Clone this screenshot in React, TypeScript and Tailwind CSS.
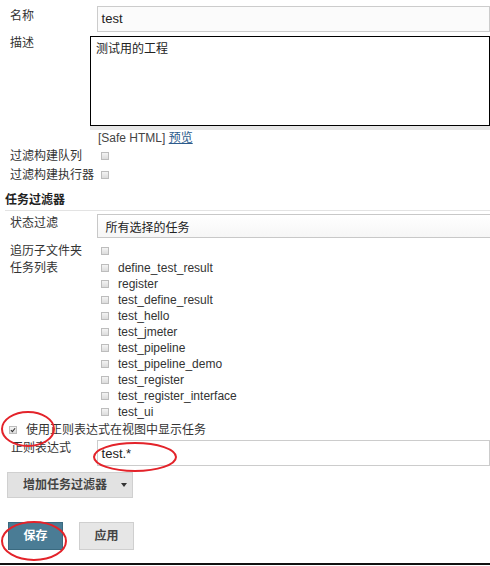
import React from "react";

const font = { fontFamily: '"Liberation Sans", "Noto Sans CJK SC", sans-serif' };

function Box({ checked = false }: { checked?: boolean }) {
  return (
    <span className="inline-flex h-[8px] w-[8px] shrink-0 items-center justify-center border border-[#bdbdbd] bg-gradient-to-b from-[#f4f4f4] to-[#dcdcdc]">
      {checked && (
        <svg width="8" height="8" viewBox="0 0 8 8">
          <path d="M1.2 4.2 L3.2 6.2 L6.8 1.6" stroke="#333" strokeWidth="1.4" fill="none" />
        </svg>
      )}
    </span>
  );
}

const jobs = [
  "define_test_result",
  "register",
  "test_define_result",
  "test_hello",
  "test_jmeter",
  "test_pipeline",
  "test_pipeline_demo",
  "test_register",
  "test_register_interface",
  "test_ui",
];

export default function App() {
  return (
    <div className="relative w-[490px] h-[566px] overflow-hidden bg-white text-[12px] text-[#333]" style={font}>
      <div className="flex flex-col pt-[6px]">
        {/* 名称 */}
        <div className="flex h-[26px]">
          <div className="w-[98px] pl-[10px] pt-[2px] leading-[16px]">名称</div>
          <div className="flex h-[26px] w-[400px] items-center border border-[#cccccc] bg-[#fbfbfb] pl-[4px] text-[13px] text-[#222]">test</div>
        </div>
        {/* 描述 */}
        <div className="mt-[4px] flex">
          <div className="w-[98px] pl-[10px] leading-[14px]">描述</div>
          <div className="flex flex-col">
            <div className="h-[90px] w-[400px] border border-black bg-white pl-[5px] pt-[4px] text-[12px] leading-[16px] text-[#222]">测试用的工程</div>
            <div className="h-[4px] w-[400px] bg-[#e6e6e6]" />
          </div>
        </div>
        {/* Safe HTML */}
        <div className="mt-[1px] flex h-[14px] items-center pl-[98px] leading-[14px] text-[#444]">
          [Safe HTML]&nbsp;<span className="text-[#2c5b8c] underline">预览</span>
        </div>
        {/* 过滤构建队列 */}
        <div className="mt-[1px] flex h-[19px] items-center">
          <div className="w-[101px] pl-[10px]">过滤构建队列</div>
          <Box />
        </div>
        <div className="flex h-[19px] items-center">
          <div className="w-[101px] pl-[10px]">过滤构建执行器</div>
          <Box />
        </div>
        {/* 任务过滤器 */}
        <div className="ml-[5px] mt-[7px] flex h-[20px] items-start border-b border-[#e3e3e3] font-bold leading-[18px] text-[#222]">
          任务过滤器
        </div>
        {/* 状态过滤 */}
        <div className="mt-[3px] flex h-[24px]">
          <div className="w-[98px] pl-[10px] pt-[1px] leading-[16px]">状态过滤</div>
          <div className="flex h-[24px] w-[400px] items-center border-y border-l border-[#c8c8c8] bg-gradient-to-b from-[#ffffff] to-[#f6f6f6] pl-[8px] pt-[3px] text-[#222]">所有选择的任务</div>
        </div>
        {/* 追历子文件夹 */}
        <div className="mt-[4px] flex h-[18px] items-center">
          <div className="w-[101px] pl-[10px]">追历子文件夹</div>
          <Box />
        </div>
        {/* 任务列表 */}
        <div className="flex">
          <div className="w-[101px] pl-[10px] leading-[16px]">任务列表</div>
          <div className="flex flex-col">
            {jobs.map((j) => (
              <div key={j} className="flex h-[16px] items-center">
                <Box />
                <span className="ml-[9px] text-[#333]">{j}</span>
              </div>
            ))}
          </div>
        </div>
        {/* regex checkbox */}
        <div className="mt-[1px] flex h-[18px] items-center pl-[9px]">
          <Box checked />
          <span className="ml-[9px]">使用正则表达式在视图中显示任务</span>
        </div>
        {/* 正则表达式 */}
        <div className="mt-[1px] flex h-[26px]">
          <div className="w-[98px] pl-[11px] pt-[1px] leading-[14px]">正则表达式</div>
          <div className="flex h-[26px] w-[400px] items-center border border-[#cccccc] bg-white pl-[4px] pt-[2px] text-[13px] text-[#222]">test.*</div>
        </div>
        {/* add filter button */}
        <div className="ml-[7px] mt-[6px] flex h-[26px] w-[126px] items-center border border-[#d0d0d0] bg-[#e2e2e2] pl-[15px] font-bold text-[#444]">
          增加任务过滤器
          <span className="ml-[14px] inline-block h-0 w-0 border-x-[3px] border-t-[4px] border-x-transparent border-t-[#333]" />
        </div>
        {/* save / apply */}
        <div className="ml-[8px] mt-[24px] flex h-[28px] gap-[16px]">
          <div className="flex h-[28px] w-[55px] items-center justify-center border border-[#3a6a80] bg-[#4a7c95] font-bold text-white">保存</div>
          <div className="flex h-[28px] w-[55px] items-center justify-center border border-[#cfcfcf] bg-[#e6e6e6] font-bold text-[#444]">应用</div>
        </div>
        <div className="mt-[13px] h-[2px] w-full bg-[#111]" />
      </div>

      {/* red annotation ellipses */}
      <svg className="pointer-events-none absolute left-0 top-0" width="490" height="566">
        <ellipse cx="28" cy="429" rx="26" ry="17" fill="none" stroke="#e3232a" strokeWidth="2" />
        <ellipse cx="135" cy="457" rx="41" ry="14" fill="none" stroke="#e3232a" strokeWidth="2" />
        <ellipse cx="34" cy="541" rx="32" ry="19" fill="none" stroke="#e3232a" strokeWidth="2" />
      </svg>
    </div>
  );
}
